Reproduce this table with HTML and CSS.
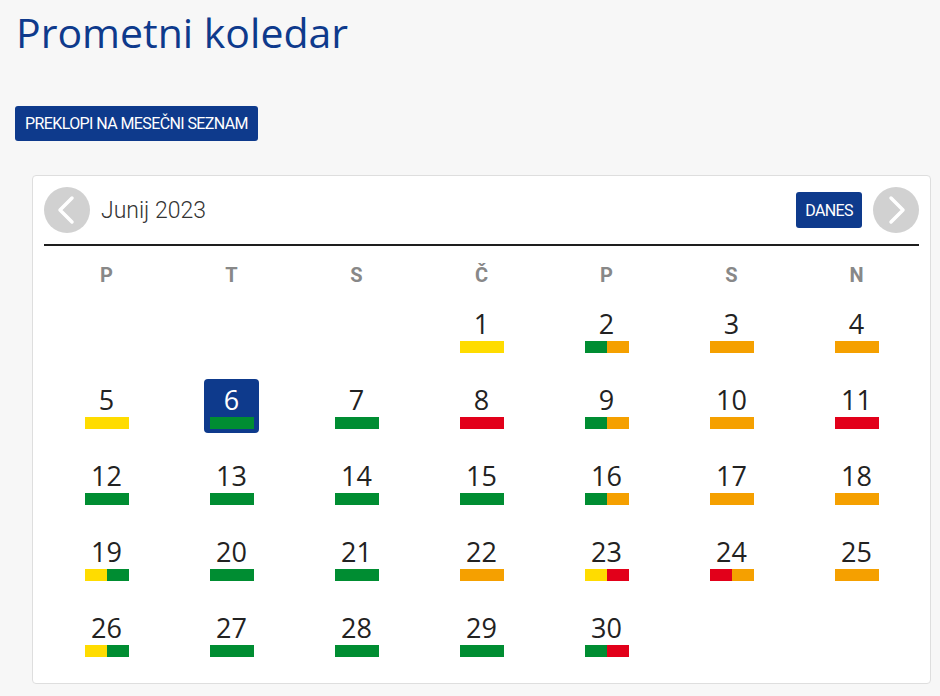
FILE: index.html
```html
<!DOCTYPE html>
<html lang="sl">
<head>
<meta charset="utf-8">
<title>Prometni koledar</title>
<link rel="stylesheet" href="styles.css">
</head>
<body>
<div class="page">
  <h1 class="title">Prometni koledar</h1>
  <button class="btn btn-toggle">PREKLOPI NA MESEČNI SEZNAM</button>
  <div class="card">
    <div class="cal-head">
      <button class="circle" aria-label="Prejšnji mesec">
        <svg width="46" height="46" viewBox="0 0 46 46"><path d="M28 11 L16 23 L28 35" fill="none" stroke="#fff" stroke-width="3.5" stroke-linecap="round" stroke-linejoin="round"/></svg>
      </button>
      <div class="month">Junij 2023</div>
      <button class="btn btn-today">DANES</button>
      <button class="circle" aria-label="Naslednji mesec">
        <svg width="46" height="46" viewBox="0 0 46 46"><path d="M18 11 L30 23 L18 35" fill="none" stroke="#fff" stroke-width="3.5" stroke-linecap="round" stroke-linejoin="round"/></svg>
      </button>
    </div>
    <div class="grid">
      <div class="wd">P</div><div class="wd">T</div><div class="wd">S</div><div class="wd">Č</div><div class="wd">P</div><div class="wd">S</div><div class="wd">N</div>

      <div class="cell"></div><div class="cell"></div><div class="cell"></div>
      <div class="cell"><div class="day"><span class="num">1</span><span class="bar"><i class="y"></i></span></div></div>
      <div class="cell"><div class="day"><span class="num">2</span><span class="bar"><i class="g"></i><i class="o"></i></span></div></div>
      <div class="cell"><div class="day"><span class="num">3</span><span class="bar"><i class="o"></i></span></div></div>
      <div class="cell"><div class="day"><span class="num">4</span><span class="bar"><i class="o"></i></span></div></div>

      <div class="cell"><div class="day"><span class="num">5</span><span class="bar"><i class="y"></i></span></div></div>
      <div class="cell"><div class="day today"><span class="num">6</span><span class="bar"><i class="g"></i></span></div></div>
      <div class="cell"><div class="day"><span class="num">7</span><span class="bar"><i class="g"></i></span></div></div>
      <div class="cell"><div class="day"><span class="num">8</span><span class="bar"><i class="r"></i></span></div></div>
      <div class="cell"><div class="day"><span class="num">9</span><span class="bar"><i class="g"></i><i class="o"></i></span></div></div>
      <div class="cell"><div class="day"><span class="num">10</span><span class="bar"><i class="o"></i></span></div></div>
      <div class="cell"><div class="day"><span class="num">11</span><span class="bar"><i class="r"></i></span></div></div>

      <div class="cell"><div class="day"><span class="num">12</span><span class="bar"><i class="g"></i></span></div></div>
      <div class="cell"><div class="day"><span class="num">13</span><span class="bar"><i class="g"></i></span></div></div>
      <div class="cell"><div class="day"><span class="num">14</span><span class="bar"><i class="g"></i></span></div></div>
      <div class="cell"><div class="day"><span class="num">15</span><span class="bar"><i class="g"></i></span></div></div>
      <div class="cell"><div class="day"><span class="num">16</span><span class="bar"><i class="g"></i><i class="o"></i></span></div></div>
      <div class="cell"><div class="day"><span class="num">17</span><span class="bar"><i class="o"></i></span></div></div>
      <div class="cell"><div class="day"><span class="num">18</span><span class="bar"><i class="o"></i></span></div></div>

      <div class="cell"><div class="day"><span class="num">19</span><span class="bar"><i class="y"></i><i class="g"></i></span></div></div>
      <div class="cell"><div class="day"><span class="num">20</span><span class="bar"><i class="g"></i></span></div></div>
      <div class="cell"><div class="day"><span class="num">21</span><span class="bar"><i class="g"></i></span></div></div>
      <div class="cell"><div class="day"><span class="num">22</span><span class="bar"><i class="o"></i></span></div></div>
      <div class="cell"><div class="day"><span class="num">23</span><span class="bar"><i class="y"></i><i class="r"></i></span></div></div>
      <div class="cell"><div class="day"><span class="num">24</span><span class="bar"><i class="r"></i><i class="o"></i></span></div></div>
      <div class="cell"><div class="day"><span class="num">25</span><span class="bar"><i class="o"></i></span></div></div>

      <div class="cell"><div class="day"><span class="num">26</span><span class="bar"><i class="y"></i><i class="g"></i></span></div></div>
      <div class="cell"><div class="day"><span class="num">27</span><span class="bar"><i class="g"></i></span></div></div>
      <div class="cell"><div class="day"><span class="num">28</span><span class="bar"><i class="g"></i></span></div></div>
      <div class="cell"><div class="day"><span class="num">29</span><span class="bar"><i class="g"></i></span></div></div>
      <div class="cell"><div class="day"><span class="num">30</span><span class="bar"><i class="g"></i><i class="r"></i></span></div></div>
      <div class="cell"></div><div class="cell"></div>
    </div>
  </div>
</div>
</body>
</html>
```
FILE: styles.css
```css
html, body {
  margin: 0;
  padding: 0;
  background: #f7f7f7;
}
body {
  font-family: "Open Sans", "DejaVu Sans", sans-serif;
  color: #222;
}
.page {
  padding: 0 9px 0 15px;
}
.title {
  margin: 0;
  padding-top: 4px;
  font-family: "Open Sans", sans-serif;
  font-weight: 400;
  font-size: 41px;
  line-height: 56px;
  color: #0e3a8c;
  padding-left: 1px;
}
.btn {
  font-family: Roboto, "Liberation Sans", sans-serif;
  background: #0e3a8c;
  color: #fff;
  border: none;
  border-radius: 3px;
  cursor: pointer;
  letter-spacing: -0.6px;
}
.btn-toggle {
  margin-top: 46px;
  height: 35px;
  padding: 0 10px;
  font-size: 16px;
  display: block;
}
.card {
  margin: 34px 0 0 17px;
  background: #fff;
  border: 1px solid #dedede;
  border-radius: 4px;
  padding: 11px;
}
.cal-head {
  display: flex;
  align-items: center;
  gap: 11px;
  padding-bottom: 11px;
  border-bottom: 2px solid #1e1e1e;
}
.circle {
  width: 46px;
  height: 46px;
  border-radius: 50%;
  background: #d1d1d1;
  border: none;
  padding: 0;
  display: flex;
  align-items: center;
  justify-content: center;
}
.month {
  flex: 1;
  font-family: Roboto, sans-serif;
  font-weight: 300;
  font-size: 23px;
  color: #333;
  padding-top: 1px;
}
.btn-today {
  height: 36px;
  padding: 0 9px;
  font-size: 16px;
}
.grid {
  display: grid;
  grid-template-columns: repeat(7, 1fr);
  grid-template-rows: 46px;
  grid-auto-rows: 76px;
}
.wd {
  box-sizing: border-box;
  padding-top: 17px;
  line-height: 24px;
  text-align: center;
  font-family: Roboto, sans-serif;
  font-weight: 700;
  font-size: 20px;
  color: #888;
}
.cell {
  display: flex;
  justify-content: center;
  align-items: center;
}
.day {
  width: 55px;
  height: 54px;
  box-sizing: border-box;
  padding-top: 4px;
  display: flex;
  flex-direction: column;
  align-items: center;
  border-radius: 4px;
}
.num {
  font-size: 27px;
  line-height: 34px;
  color: #222;
}
.bar {
  display: flex;
  width: 44px;
  height: 12px;
}
.bar i {
  flex: 1;
}
.y { background: #ffdc00; }
.g { background: #008d32; }
.o { background: #f5a000; }
.r { background: #e2001a; }
.today {
  background: #0e3a8c;
}
.today .num {
  color: #fff;
}
```
